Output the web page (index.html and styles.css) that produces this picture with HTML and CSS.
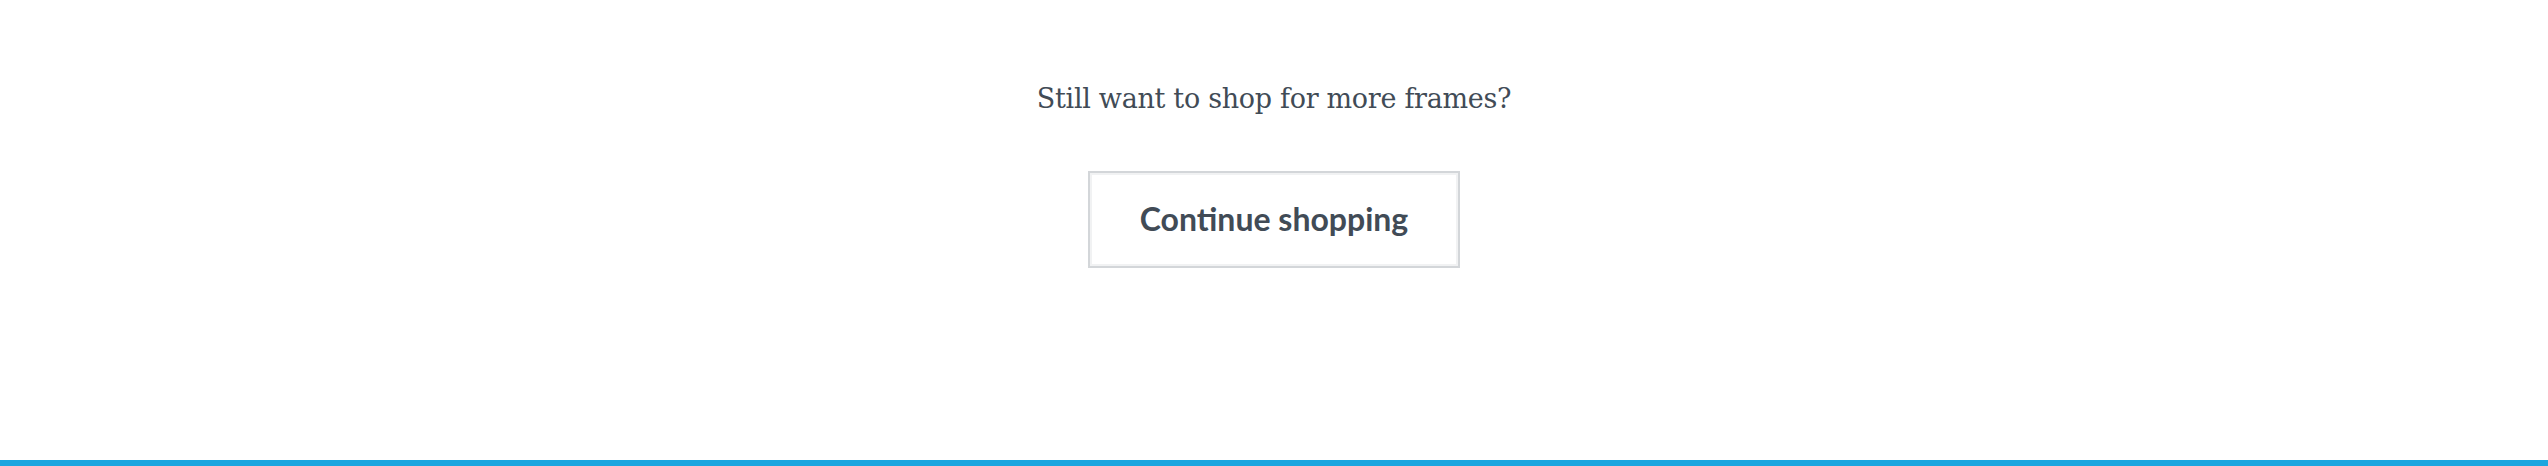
FILE: index.html
```html
<!DOCTYPE html>
<html lang="en">
<head>
<meta charset="utf-8">
<title>Continue shopping</title>
<link rel="stylesheet" href="styles.css">
</head>
<body>
<main class="page">
  <section class="prompt">
    <p class="prompt-title">Still want to shop for more frames?</p>
    <a class="btn-continue" href="#">Continue shopping</a>
  </section>
</main>
<footer class="bar"></footer>
</body>
</html>
```
FILE: styles.css
```css
html, body {
  margin: 0;
  padding: 0;
  background: #fff;
}
.page {
  height: 460px;
  display: flex;
  flex-direction: column;
  align-items: center;
}
.prompt {
  display: flex;
  flex-direction: column;
  align-items: center;
  padding-top: 81px;
}
.prompt-title {
  margin: 0;
  font-family: "DejaVu Serif", "Liberation Serif", serif;
  font-size: 27px;
  line-height: 36px;
  letter-spacing: -0.3px;
  color: #414b56;
}
.btn-continue {
  margin-top: 54px;
  box-sizing: border-box;
  width: 372px;
  height: 97px;
  display: flex;
  align-items: center;
  justify-content: center;
  padding-bottom: 3px;
  border: 2px solid #d3d6d9;
  box-shadow: inset 0 0 0 2px #f1f2f3;
  font-family: "Lato", "Open Sans", sans-serif;
  font-weight: 700;
  font-size: 32px;
  color: #414b56;
  text-decoration: none;
}
.bar {
  height: 6px;
  background: #1ba6df;
}
```
